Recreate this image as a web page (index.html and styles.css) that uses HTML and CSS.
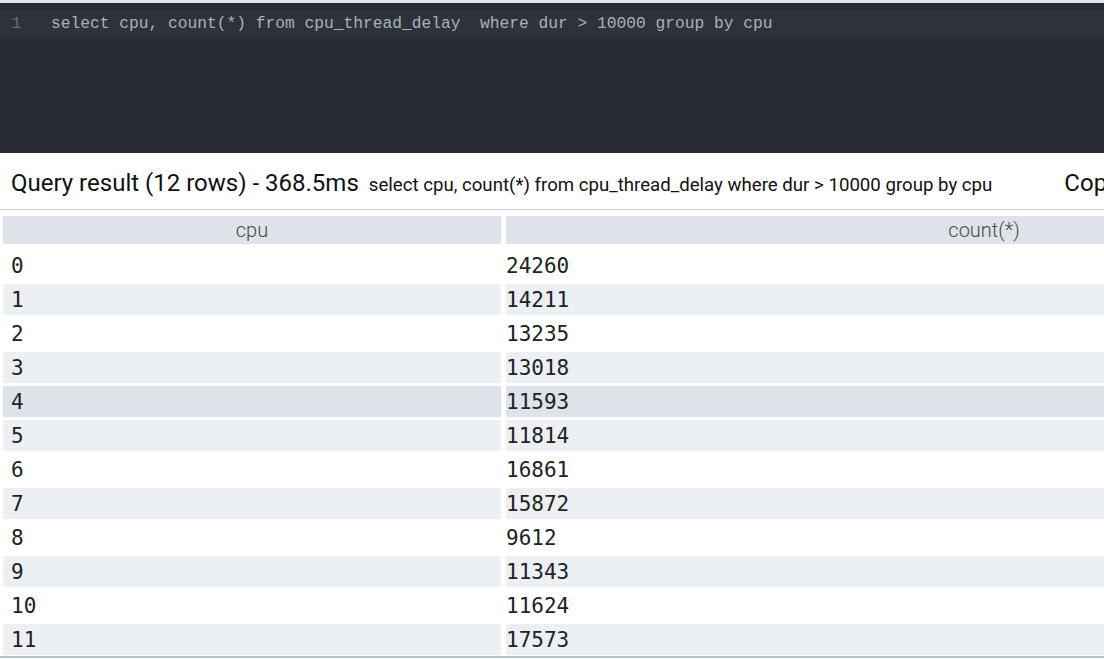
FILE: index.html
```html
<!DOCTYPE html>
<html>
<head>
<meta charset="utf-8">
<link rel="stylesheet" href="styles.css">
</head>
<body>
<div class="page">
  <div class="editor">
    <div class="line">
      <span class="gutter">1</span>
      <span class="code">select cpu, count(*) from cpu_thread_delay  where dur &gt; 10000 group by cpu</span>
    </div>
  </div>
  <div class="result-head">
    <span class="title">Query result (12 rows) - 368.5ms</span>
    <span class="query">select cpu, count(*) from cpu_thread_delay where dur &gt; 10000 group by cpu</span>
    <span class="copy">Copy query</span>
  </div>
  <div class="table">
    <div class="th">cpu</div><div class="th">count(*)</div>
    <div class="tr"><div class="td c1">0</div><div class="td c2">24260</div></div>
    <div class="tr odd"><div class="td c1">1</div><div class="td c2">14211</div></div>
    <div class="tr"><div class="td c1">2</div><div class="td c2">13235</div></div>
    <div class="tr odd"><div class="td c1">3</div><div class="td c2">13018</div></div>
    <div class="tr hover"><div class="td c1">4</div><div class="td c2">11593</div></div>
    <div class="tr odd"><div class="td c1">5</div><div class="td c2">11814</div></div>
    <div class="tr"><div class="td c1">6</div><div class="td c2">16861</div></div>
    <div class="tr odd"><div class="td c1">7</div><div class="td c2">15872</div></div>
    <div class="tr"><div class="td c1">8</div><div class="td c2">9612</div></div>
    <div class="tr odd"><div class="td c1">9</div><div class="td c2">11343</div></div>
    <div class="tr"><div class="td c1">10</div><div class="td c2">11624</div></div>
    <div class="tr odd"><div class="td c1">11</div><div class="td c2">17573</div></div>
  </div>
  <div class="bottom-line"></div>
</div>
</body>
</html>
```
FILE: styles.css
```css
html, body {
  margin: 0;
  padding: 0;
  background: #ffffff;
  overflow: hidden;
}
.page {
  width: 1500px;
  height: 659px;
}
.editor {
  height: 143px;
  border-top: 3px solid #e6e7e9;
  background: #282c34;
  padding-top: 7px;
  box-sizing: content-box;
  width: 1104px;
}
.line {
  display: flex;
  align-items: center;
  height: 27px;
  background: #2d323b;
}
.gutter {
  width: 21px;
  text-align: right;
  color: #646b78;
  font-family: "Liberation Mono", monospace;
  font-size: 16px;
  margin-right: 30px;
}
.code {
  color: #aab0ba;
  font-family: "Liberation Mono", monospace;
  font-size: 16.25px;
  white-space: pre;
}
.result-head {
  height: 57px;
  display: flex;
  align-items: baseline;
  padding-left: 11px;
  padding-top: 16px;
  box-sizing: border-box;
  border-bottom: 1px solid #cfcfcf;
  white-space: nowrap;
  font-family: Roboto, sans-serif;
  color: #111;
  width: 1500px;
}
.title {
  font-size: 24px;
}
.query {
  font-size: 18.65px;
  margin-left: 10px;
}
.copy {
  font-size: 24px;
  margin-left: 72px;
}
.table {
  display: grid;
  grid-template-columns: 498px 956px;
  column-gap: 5px;
  row-gap: 3px;
  padding-left: 3px;
  padding-top: 6px;
}
.th {
  height: 28px;
  background: #dee2e9;
  text-align: center;
  font-family: Roboto, sans-serif;
  font-weight: 300;
  font-size: 20px;
  line-height: 28px;
  color: #4a4a4a;
  margin-bottom: 3px;
}
.tr {
  display: contents;
}
.td {
  box-sizing: border-box;
  height: 31px;
  padding-top: 2px;
  line-height: 29px;
  font-family: "DejaVu Sans Mono", monospace;
  font-size: 21px;
  font-variant-numeric: slashed-zero;
  color: #222;
  background: #ffffff;
}
.c1 { padding-left: 8px; }
.c2 { padding-left: 0; }
.odd .td { background: #edf0f3; }
.hover .td { background: #dee2e9; }
.bottom-line {
  margin-top: 1px;
  height: 2px;
  background: #b3c0ce;
  width: 1500px;
}
```
